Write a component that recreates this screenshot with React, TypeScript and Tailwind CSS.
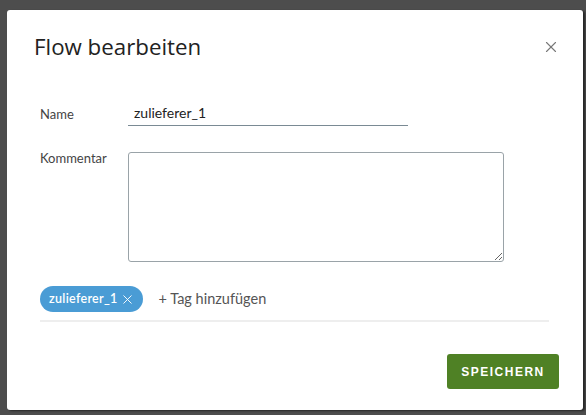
import { X } from 'lucide-react';

export default function App() {
  return (
    <div className="w-[586px] h-[415px] bg-[#4d4d4d] pt-[10px] pl-[7px] font-['Lato',sans-serif]">
      <div className="w-[576px] h-[400px] bg-white rounded-[3px] shadow-[2px_1px_2px_rgba(0,0,0,0.5)] flex flex-col">
        {/* Header */}
        <div className="flex items-start justify-between pl-[27px] pr-[23px] pt-[22px]">
          <h1 className="text-[22.3px] leading-[30px] text-[#222] font-['Open_Sans',sans-serif] font-normal">
            Flow bearbeiten
          </h1>
          <X className="mt-[6px] w-[18px] h-[18px] text-[#777]" strokeWidth={1.5} />
        </div>

        {/* Form */}
        <div className="pl-[33px] pr-[33px] pt-[41px]">
          <div className="flex items-center">
            <label className="w-[88px] text-[13px] text-[#444]">Name</label>
            <div className="w-[280px] border-b border-[#7a8a94] pb-[2px] pl-[6px] text-[14px] text-[#222] leading-[20px]">
              zulieferer_1
            </div>
          </div>

          <div className="flex mt-[26px]">
            <label className="w-[88px] text-[13px] text-[#444] -mt-[3px]">Kommentar</label>
            <textarea className="w-[376px] h-[110px] border border-[#9aa3a8] rounded-[3px] resize outline-none" />
          </div>

          {/* Tags */}
          <div className="mt-[24px] flex items-center gap-[16px] pb-[8px] w-[509px] border-b-2 border-[#eeeeee]">
            <span className="flex items-center h-[26px] pl-[9px] pr-[8px] rounded-full bg-[#4a9cd5] text-white text-[12.5px] font-semibold tracking-[0.3px]">
              zulieferer_1
              <X className="ml-[2px] w-[15px] h-[15px]" strokeWidth={1.5} />
            </span>
            <span className="text-[14.5px] text-[#555]">+ Tag hinzufügen</span>
          </div>
        </div>

        {/* Footer */}
        <div className="flex justify-end pr-[24px] mt-[32px]">
          <button className="w-[112px] h-[35px] rounded-[3px] bg-[#4f8125] text-white text-[12px] font-bold tracking-[1.5px] font-['Liberation_Sans',sans-serif]">
            SPEICHERN
          </button>
        </div>
      </div>
    </div>
  );
}
